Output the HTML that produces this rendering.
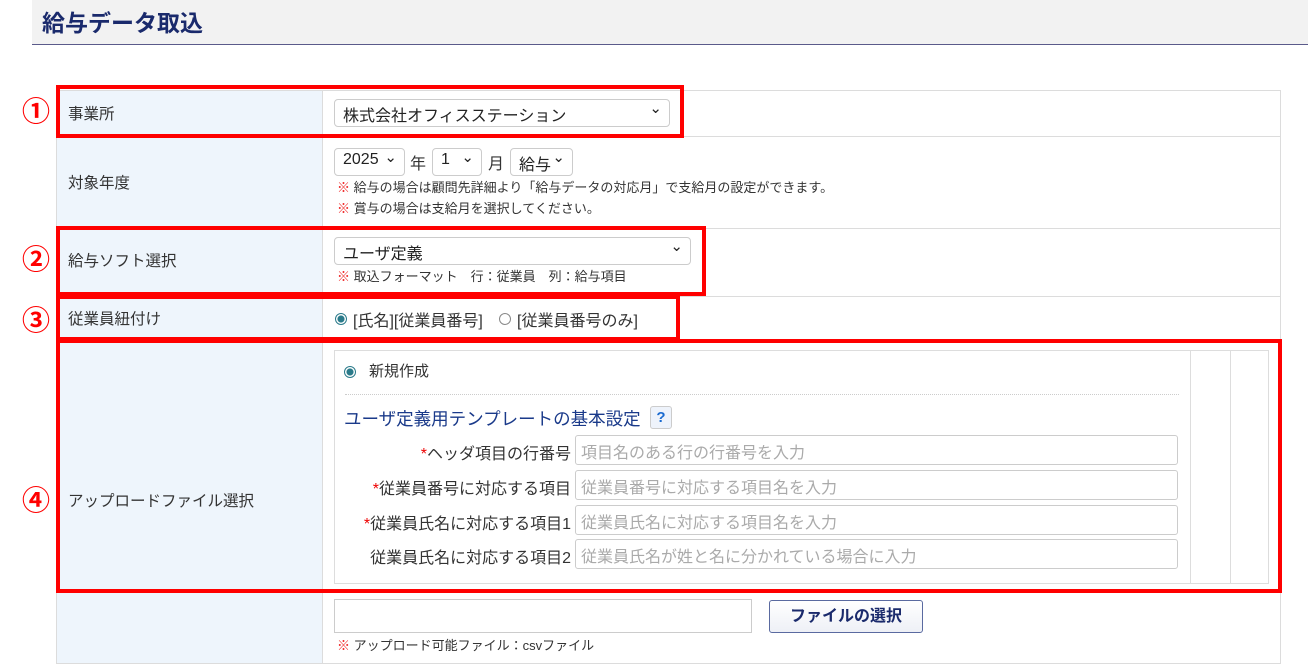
<!DOCTYPE html>
<html><head><meta charset="utf-8"><style>
*{box-sizing:border-box;margin:0;padding:0}
body{width:1308px;height:670px;background:#fff;position:relative;overflow:hidden;font-family:"Liberation Sans","Noto Sans CJK JP",sans-serif;color:#333;font-size:14px}
.a{position:absolute;white-space:nowrap}
.hdr{left:32px;top:0;width:1276px;height:45px;background:#f2f2f2;border-bottom:1px solid #5a5a8a}
.title{left:42px;top:4px;font-size:23px;font-weight:bold;color:#1a2a6c}
.lab{background:#eef5fc;}
.cell{border:1px solid #dcdcdc}
.lt{font-size:15.5px;color:#333}
.sel{background:#fff;border:1px solid #ccc;border-radius:4px;height:28px;font-size:16px;color:#222;padding:2px 8px}
.sel:after{content:"⌄";position:absolute;right:7px;top:-1px;font-size:15px}
.red{border:4px solid #f00}
.num{color:#f00;font-size:28px;font-weight:bold;width:28px;text-align:center;line-height:30px}
.note{font-size:13px;color:#333}
.note b{color:#e22;font-weight:bold}
.inp{background:#fff;border:1px solid #ccc;border-radius:3px;height:30px;font-size:16px;color:#aaa;padding:3px 5px}
.rl{font-size:16px;color:#333;text-align:right;width:230px}
.rl i{color:#e00;font-style:normal}
.radio{width:12px;height:12px;border-radius:50%;border:1px solid #888;background:#fff}
.radio.on{border:1px solid #2a7a8a;background:radial-gradient(#2a7a8a 45%,#fff 55%)}
</style></head><body>
<div class="a hdr"></div>
<div class="a title">給与データ取込</div>

<div class="a cell" style="left:56px;top:90px;width:1225px;height:574px"></div>
<div class="a lab" style="left:57px;top:91px;width:265px;height:572px"></div>
<div class="a" style="left:322px;top:91px;width:1px;height:572px;background:#dcdcdc"></div>
<div class="a" style="left:57px;top:136px;width:1224px;height:1px;background:#dcdcdc"></div>
<div class="a" style="left:57px;top:228px;width:1224px;height:1px;background:#dcdcdc"></div>
<div class="a" style="left:57px;top:296px;width:1224px;height:1px;background:#dcdcdc"></div>
<div class="a" style="left:57px;top:340px;width:1224px;height:1px;background:#dcdcdc"></div>
<div class="a" style="left:57px;top:592px;width:1224px;height:1px;background:#dcdcdc"></div>

<div class="a lt" style="left:68px;top:102px">事業所</div>
<div class="a lt" style="left:68px;top:171px">対象年度</div>
<div class="a lt" style="left:68px;top:249px">給与ソフト選択</div>
<div class="a lt" style="left:68px;top:307px">従業員紐付け</div>
<div class="a lt" style="left:68px;top:489px">アップロードファイル選択</div>

<div class="a sel" style="left:334px;top:99px;width:336px">株式会社オフィスステーション</div>
<div class="a sel" style="left:334px;top:148px;width:71px">2025</div>
<div class="a" style="left:410px;top:150px;font-size:16px">年</div>
<div class="a sel" style="left:432px;top:148px;width:50px">1</div>
<div class="a" style="left:488px;top:150px;font-size:16px">月</div>
<div class="a sel" style="left:510px;top:148px;width:63px">給与</div>
<div class="a note" style="left:337px;top:177px"><b>※</b> 給与の場合は顧問先詳細より「給与データの対応月」で支給月の設定ができます。</div>
<div class="a note" style="left:337px;top:198px"><b>※</b> 賞与の場合は支給月を選択してください。</div>

<div class="a sel" style="left:334px;top:237px;width:357px">ユーザ定義</div>
<div class="a note" style="left:337px;top:266px"><b>※</b> 取込フォーマット　行：従業員　列：給与項目</div>

<div class="a radio on" style="left:335px;top:313px"></div>
<div class="a" style="left:353px;top:307px;font-size:16px">[氏名][従業員番号]</div>
<div class="a radio" style="left:499px;top:313px"></div>
<div class="a" style="left:517px;top:307px;font-size:16px">[従業員番号のみ]</div>

<div class="a" style="left:334px;top:350px;width:935px;height:234px;border:1px solid #ddd;background:#fff"></div>
<div class="a" style="left:1190px;top:351px;width:1px;height:232px;background:#ddd"></div>
<div class="a" style="left:1230px;top:351px;width:1px;height:232px;background:#ddd"></div>
<div class="a radio on" style="left:344px;top:366px"></div>
<div class="a" style="left:369px;top:360px;font-size:15px">新規作成</div>
<div class="a" style="left:345px;top:394px;width:834px;border-top:1px dotted #ccc"></div>
<div class="a" style="left:344px;top:406px;font-size:17.5px;color:#1a3a8a">ユーザ定義用テンプレートの基本設定</div>
<div class="a" style="left:650px;top:406px;width:22px;height:23px;border:1px solid #ccc;border-radius:3px;background:#eef3fb;color:#1a6ad0;font-weight:bold;text-align:center;font-size:15px;line-height:21px">?</div>

<div class="a rl" style="left:341px;top:440px"><i>*</i>ヘッダ項目の行番号</div>
<div class="a inp" style="left:575px;top:435px;width:603px">項目名のある行の行番号を入力</div>
<div class="a rl" style="left:341px;top:475px"><i>*</i>従業員番号に対応する項目</div>
<div class="a inp" style="left:575px;top:470px;width:603px">従業員番号に対応する項目名を入力</div>
<div class="a rl" style="left:341px;top:510px"><i>*</i>従業員氏名に対応する項目1</div>
<div class="a inp" style="left:575px;top:505px;width:603px">従業員氏名に対応する項目名を入力</div>
<div class="a rl" style="left:341px;top:544px">従業員氏名に対応する項目2</div>
<div class="a inp" style="left:575px;top:539px;width:603px">従業員氏名が姓と名に分かれている場合に入力</div>

<div class="a" style="left:334px;top:599px;width:418px;height:34px;border:1px solid #ccc;background:#fff"></div>
<div class="a" style="left:769px;top:600px;width:154px;height:33px;border:1px solid #5a6aa0;border-radius:3px;background:linear-gradient(#fff,#eef0f6);color:#1a2a6c;font-weight:bold;font-size:16px;text-align:center;line-height:31px">ファイルの選択</div>
<div class="a note" style="left:337px;top:635px"><b>※</b> アップロード可能ファイル：csvファイル</div>

<div class="a red" style="left:56px;top:85px;width:628px;height:53px"></div>
<div class="a red" style="left:56px;top:226px;width:650px;height:70px"></div>
<div class="a red" style="left:56px;top:295px;width:624px;height:46px"></div>
<div class="a red" style="left:56px;top:339px;width:1226px;height:254px"></div>
<div class="a num" style="left:22px;top:97px">①</div>
<div class="a num" style="left:22px;top:245px">②</div>
<div class="a num" style="left:22px;top:306px">③</div>
<div class="a num" style="left:22px;top:486px">④</div>
</body></html>
